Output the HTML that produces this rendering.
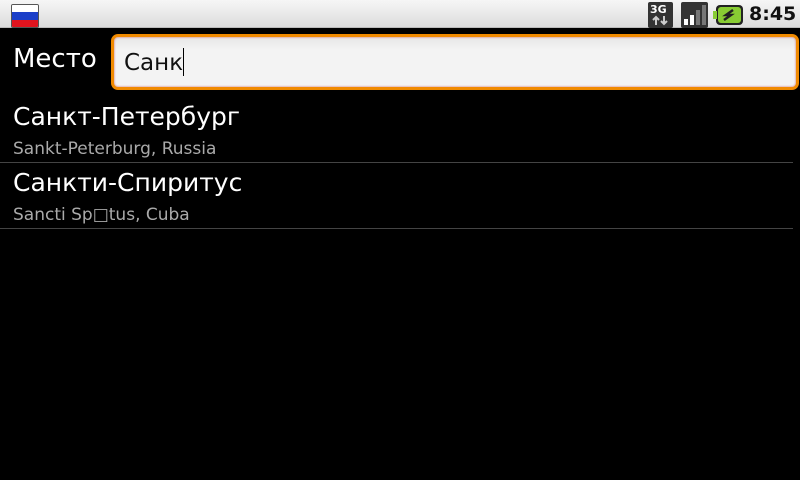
<!DOCTYPE html>
<html><head><meta charset="utf-8"><style>
*{margin:0;padding:0;box-sizing:border-box}
body{width:800px;height:480px;background:#000;overflow:hidden;font-family:"DejaVu Sans","Liberation Sans",sans-serif;position:relative}
.sb{position:absolute;left:0;top:0;width:800px;height:28px;background:linear-gradient(#f6f6f6,#dcdcdc);border-bottom:1px solid #bbb}
.flag{position:absolute;left:11px;top:4px;width:28px;height:24px;border:1px solid #555;border-radius:2px;overflow:hidden}
.flag div{height:33.4%}
.time{position:absolute;left:749px;top:3px;font-size:19px;font-weight:bold;color:#111}
.lbl{position:absolute;left:13px;top:44px;color:#fff;font-size:26px}
.field{position:absolute;left:111px;top:34px;width:688px;height:56px;border:3px solid #f08a00;border-radius:7px;background:linear-gradient(#e6e6e6,#f3f3f3 25%,#f3f3f3);box-shadow:inset 0 0 2px #c66}
.field>span{position:absolute;left:10px;top:11px;font-size:23px;color:#111}
.cur{display:inline-block;width:1px;height:28px;background:#000;vertical-align:-6px}
.t{position:absolute;left:13px;color:#fff;font-size:25px}
.s{position:absolute;left:13px;color:#aaa;font-size:17px}
.hr{position:absolute;left:0;width:793px;height:1px;background:#444}
</style></head><body>
<div class="sb">
 <div class="flag"><div style="background:#fff"></div><div style="background:#1c3fc8"></div><div style="background:#e1141e"></div></div>
 <svg style="position:absolute;left:648px;top:2px" width="25" height="26"><rect width="25" height="26" rx="2" fill="#333"/><text x="2" y="11" font-family="DejaVu Sans" font-weight="bold" font-size="11" fill="#fff">3G</text><path d="M8 23V15M5 18L8 15L11 18M16 14V22M13 19L16 22L19 19" stroke="#ccc" stroke-width="2" fill="none"/></svg>
 <svg style="position:absolute;left:681px;top:2px" width="27" height="26"><rect width="27" height="26" rx="2" fill="#333"/><rect x="3" y="17" width="4" height="6" fill="#fff"/><rect x="9" y="13" width="4" height="10" fill="#fff"/><rect x="15" y="8" width="4" height="15" fill="#777"/><rect x="21" y="3" width="4" height="20" fill="#777"/></svg>
 <svg style="position:absolute;left:713px;top:5px" width="30" height="20"><rect x="3" y="0" width="27" height="20" rx="4" fill="#222"/><rect x="0" y="6" width="4" height="8" fill="#8c3"/><rect x="5" y="2" width="23" height="16" rx="3" fill="#8c3"/><path d="M20 5 L13 10 L18 10 L11 15" stroke="#222" stroke-width="2.5" fill="none"/></svg>
 <div class="time">8:45</div>
</div>
<div class="lbl">Место</div>
<div class="field"><span>Санк<span class="cur"></span></span></div>
<div class="t" style="top:102px">Санкт-Петербург</div>
<div class="s" style="top:139px">Sankt-Peterburg, Russia</div>
<div class="hr" style="top:162px"></div>
<div class="t" style="top:168px">Санкти-Спиритус</div>
<div class="s" style="top:205px">Sancti Sp□tus, Cuba</div>
<div class="hr" style="top:228px"></div>
</body></html>
